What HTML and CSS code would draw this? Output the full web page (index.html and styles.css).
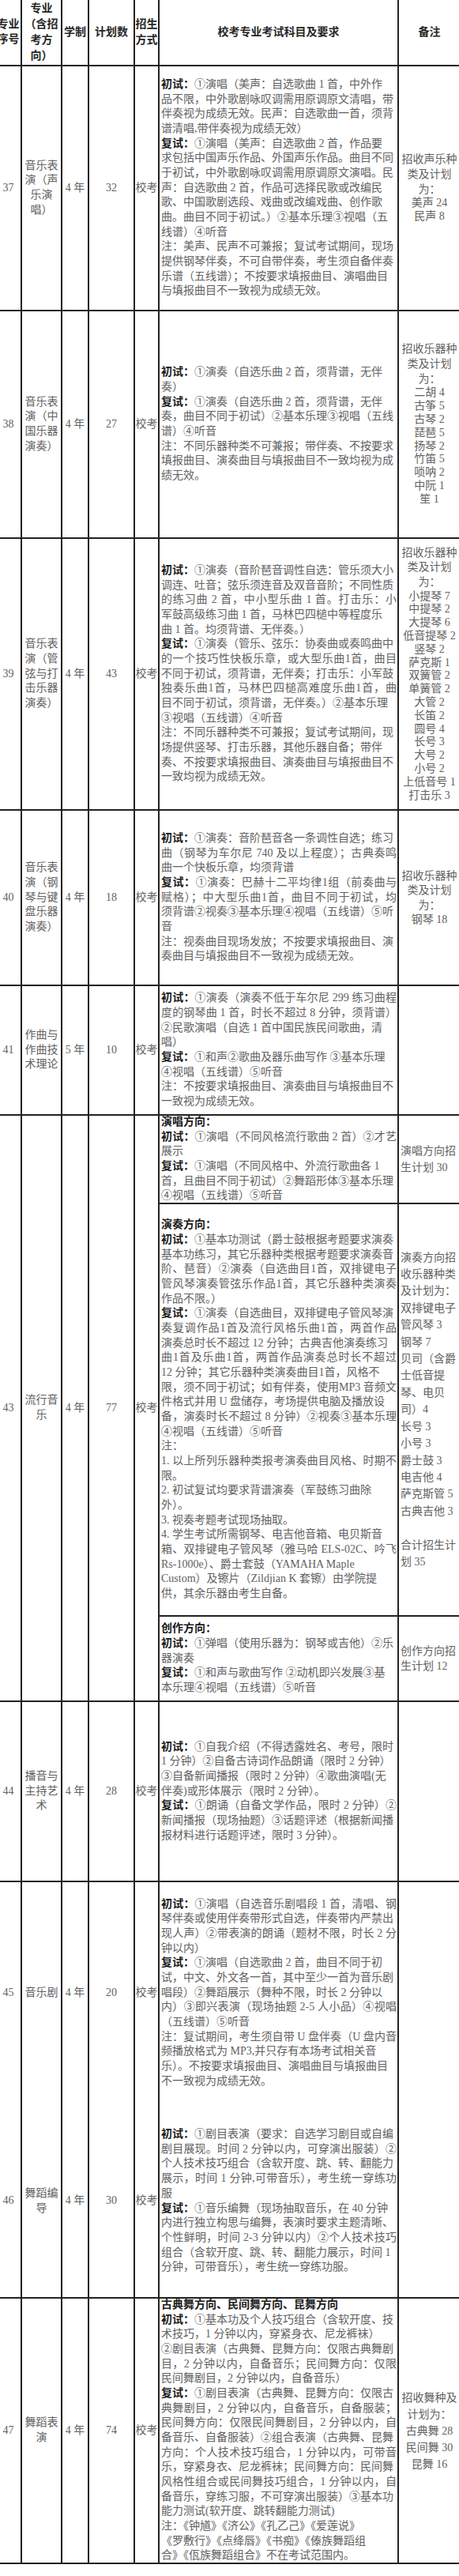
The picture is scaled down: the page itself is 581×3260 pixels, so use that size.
FILE: index.html
```
<!DOCTYPE html>
<html lang="zh-CN">
<head>
<meta charset="utf-8">
<title>校考专业考试科目及要求</title>
<link rel="stylesheet" href="styles.css">
</head>
<body>
<div class="sheet">
  <div class="c h">专业<br>序号</div>
  <div class="c h h2">专业<br>（含招<br>考方<br>向）</div>
  <div class="c h">学制</div>
  <div class="c h">计划数</div>
  <div class="c h h2">招生<br>方式</div>
  <div class="c h">校考专业考试科目及要求</div>
  <div class="c h">备注</div>

  <div class="c">37</div>
  <div class="c">音乐表<br>演（声<br>乐演<br>唱）</div>
  <div class="c">4 年</div>
  <div class="c">32</div>
  <div class="c">校考</div>
  <div class="c req"><div class="tx">
    <div><b>初试：</b>①演唱（美声：自选歌曲 1 首，中外作</div>
    <div>品不限，中外歌剧咏叹调需用原调原文清唱，带</div>
    <div>伴奏视为成绩无效。民声：自选歌曲一首，须背</div>
    <div>谱清唱,带伴奏视为成绩无效）</div>
    <div><b>复试：</b>①演唱（美声：自选歌曲 2 首，作品要</div>
    <div>求包括中国声乐作品、外国声乐作品。曲目不同</div>
    <div>于初试，中外歌剧咏叹调需用原调原文演唱。民</div>
    <div>声：自选歌曲 2 首，作品可选择民歌或改编民</div>
    <div>歌、中国歌剧选段、戏曲或改编戏曲、创作歌</div>
    <div>曲。曲目不同于初试。）②基本乐理③视唱（五</div>
    <div>线谱）④听音</div>
    <div>注：美声、民声不可兼报；复试考试期间，现场</div>
    <div>提供钢琴伴奏，不可自带伴奏，考生须自备伴奏</div>
    <div>乐谱（五线谱）；不按要求填报曲目、演唱曲目</div>
    <div>与填报曲目不一致视为成绩无效。</div>
  </div></div>
  <div class="c rm"><div>
    <div class="hd">招收声乐种<br>类及计划<br>为：</div>
    <div class="ls">美声 24<br>民声 8</div>
  </div></div>

  <div class="c">38</div>
  <div class="c">音乐表<br>演（中<br>国乐器<br>演奏）</div>
  <div class="c">4 年</div>
  <div class="c">27</div>
  <div class="c">校考</div>
  <div class="c req"><div class="tx">
    <div><b>初试：</b>①演奏（自选乐曲 2 首，须背谱，无伴</div>
    <div>奏）</div>
    <div><b>复试：</b>①演奏（自选乐曲 2 首，须背谱，无伴</div>
    <div>奏，曲目不同于初试）②基本乐理③视唱（五线</div>
    <div>谱）④听音</div>
    <div>注：不同乐器种类不可兼报；带伴奏、不按要求</div>
    <div>填报曲目、演奏曲目与填报曲目不一致均视为成</div>
    <div>绩无效。</div>
  </div></div>
  <div class="c rm"><div>
    <div class="hd">招收乐器种<br>类及计划<br>为：</div>
    <div class="ls">二胡 4<br>古筝 5<br>古琴 2<br>琵琶 5<br>扬琴 2<br>竹笛 5<br>唢呐 2<br>中阮 1<br>笙 1</div>
  </div></div>

  <div class="c">39</div>
  <div class="c">音乐表<br>演（管<br>弦与打<br>击乐器<br>演奏）</div>
  <div class="c">4 年</div>
  <div class="c">43</div>
  <div class="c">校考</div>
  <div class="c req"><div class="tx">
    <div><b>初试：</b>①演奏（音阶琶音调性自选：管乐须大小</div>
    <div>调连、吐音；弦乐须连音及双音音阶；不同性质</div>
    <div class="j">的练习曲 2 首，中小型乐曲 1 首。打击乐：小</div>
    <div>军鼓高级练习曲 1 首，马林巴四槌中等程度乐</div>
    <div>曲 1 首。均须背谱、无伴奏。）</div>
    <div><b>复试：</b>①演奏（管乐、弦乐：协奏曲或奏鸣曲中</div>
    <div class="j">的一个技巧性快板乐章，或大型乐曲1首，曲目</div>
    <div>不同于初试，须背谱，无伴奏；打击乐：小军鼓</div>
    <div class="j">独奏乐曲1首，马林巴四槌高难度乐曲1首，曲</div>
    <div>目不同于初试，须背谱，无伴奏。）②基本乐理</div>
    <div>③视唱（五线谱）④听音</div>
    <div>注：不同乐器种类不可兼报；复试考试期间，现</div>
    <div>场提供竖琴、打击乐器，其他乐器自备；带伴</div>
    <div>奏、不按要求填报曲目、演奏曲目与填报曲目不</div>
    <div>一致均视为成绩无效。</div>
  </div></div>
  <div class="c rm"><div>
    <div class="hd">招收乐器种<br>类及计划<br>为：</div>
    <div class="ls">小提琴 7<br>中提琴 2<br>大提琴 6<br>低音提琴 2<br>竖琴 2<br>萨克斯 1<br>双簧管 2<br>单簧管 2<br>大管 2<br>长笛 2<br>圆号 4<br>长号 3<br>大号 2<br>小号 2<br>上低音号 1<br>打击乐 3</div>
  </div></div>

  <div class="c">40</div>
  <div class="c">音乐表<br>演（钢<br>琴与键<br>盘乐器<br>演奏）</div>
  <div class="c">4 年</div>
  <div class="c">18</div>
  <div class="c">校考</div>
  <div class="c req"><div class="tx">
    <div><b>初试：</b>①演奏：音阶琶音各一条调性自选；练习</div>
    <div class="j">曲（钢琴为车尔尼 740 及以上程度）；古典奏鸣</div>
    <div>曲一个快板乐章，均须背谱</div>
    <div class="j"><b>复试：</b>①演奏：巴赫十二平均律1组（前奏曲与</div>
    <div class="j">赋格）；中大型乐曲1首，曲目不同于初试，均</div>
    <div>须背谱②视奏③基本乐理④视唱（五线谱）⑤听</div>
    <div>音</div>
    <div>注：视奏曲目现场发放；不按要求填报曲目、演</div>
    <div>奏曲目与填报曲目不一致视为成绩无效。</div>
  </div></div>
  <div class="c rm"><div>
    <div class="hd">招收乐器种<br>类及计划<br>为：</div>
    <div class="ls">钢琴 18</div>
  </div></div>

  <div class="c">41</div>
  <div class="c">作曲与<br>作曲技<br>术理论</div>
  <div class="c">5 年</div>
  <div class="c">10</div>
  <div class="c">校考</div>
  <div class="c req"><div class="tx">
    <div class="j"><b>初试：</b>①演奏（演奏不低于车尔尼 299 练习曲程</div>
    <div class="j">度的钢琴曲 1 首，时长不超过 8 分钟，须背谱）</div>
    <div>②民歌演唱（自选 1 首中国民族民间歌曲，清</div>
    <div>唱）</div>
    <div><b>复试：</b>①和声②歌曲及器乐曲写作 ③基本乐理</div>
    <div>④视唱（五线谱）⑤听音</div>
    <div>注：不按要求填报曲目、演奏曲目与填报曲目不</div>
    <div>一致视为成绩无效。</div>
  </div></div>
  <div class="c rm"></div>

  <div class="c span3">43</div>
  <div class="c span3">流行音<br>乐</div>
  <div class="c span3">4 年</div>
  <div class="c span3">77</div>
  <div class="c span3">校考</div>
  <div class="c req"><div class="tx">
    <div><b>演唱方向：</b></div>
    <div class="j"><b>初试：</b>①演唱（不同风格流行歌曲 2 首）②才艺</div>
    <div>展示</div>
    <div><b>复试：</b>①演唱（不同风格中、外流行歌曲各 1</div>
    <div>首，且曲目不同于初试）②舞蹈形体③基本乐理</div>
    <div>④视唱（五线谱）⑤听音</div>
  </div></div>
  <div class="c rm left"><div>演唱方向招<br>生计划 30</div></div>

  <div class="c req"><div class="tx">
    <div><b>演奏方向：</b></div>
    <div><b>初试：</b>①基本功测试（爵士鼓根据考题要求演奏</div>
    <div>基本功练习，其它乐器种类根据考题要求演奏音</div>
    <div class="j">阶、琶音）②演奏（自选曲目1首，双排键电子</div>
    <div class="j">管风琴演奏管弦乐作品1首，其它乐器种类演奏</div>
    <div>作品不限。）</div>
    <div><b>复试：</b>①演奏（自选曲目，双排键电子管风琴演</div>
    <div class="j">奏复调作品1首及流行风格乐曲1首，两首作品</div>
    <div>演奏总时长不超过 12 分钟；古典吉他演奏练习</div>
    <div class="j">曲1首及乐曲1首，两首作品演奏总时长不超过</div>
    <div>12 分钟；其它乐器种类演奏曲目1首，风格不</div>
    <div class="j">限，须不同于初试；如有伴奏，使用MP3 音频文</div>
    <div>件格式并用 U 盘储存，考场提供电脑及播放设</div>
    <div class="j">备，演奏时长不超过 8 分钟）②视奏③基本乐理</div>
    <div>④视唱（五线谱）⑤听音</div>
    <div>注：</div>
    <div class="j">1. 以上所列乐器种类报考演奏曲目风格、时期不</div>
    <div>限。</div>
    <div>2. 初试复试均要求背谱演奏（军鼓练习曲除</div>
    <div>外）。</div>
    <div>3. 视奏考题考试现场抽取。</div>
    <div>4. 学生考试所需钢琴、电吉他音箱、电贝斯音</div>
    <div class="j">箱、双排键电子管风琴（雅马哈 ELS-02C、吟飞</div>
    <div>Rs-1000e）、爵士套鼓（YAMAHA Maple</div>
    <div>Custom）及镲片（Zildjian K 套镲）由学院提</div>
    <div>供，其余乐器由考生自备。</div>
  </div></div>
  <div class="c rm left"><div>演奏方向招<br>收乐器种类<br>及计划为：<br>双排键电子<br>管风琴 3<br>钢琴 7<br>贝司（含爵<br>士低音提<br>琴、电贝<br>司）4<br>长号 3<br>小号 3<br>爵士鼓 3<br>电吉他 4<br>萨克斯管 5<br>古典吉他 3<br><br>合计招生计<br>划 35</div></div>

  <div class="c req"><div class="tx">
    <div><b>创作方向：</b></div>
    <div><b>初试：</b>①弹唱（使用乐器为：钢琴或吉他）②乐</div>
    <div>器演奏</div>
    <div><b>复试：</b>①和声与歌曲写作 ②动机即兴发展③基</div>
    <div>本乐理④视唱（五线谱）⑤听音</div>
  </div></div>
  <div class="c rm left tight"><div>创作方向招<br>生计划 12</div></div>

  <div class="c">44</div>
  <div class="c">播音与<br>主持艺<br>术</div>
  <div class="c">4 年</div>
  <div class="c">28</div>
  <div class="c">校考</div>
  <div class="c req"><div class="tx">
    <div><b>初试：</b>①自我介绍（不得透露姓名、考号，限时</div>
    <div>1 分钟）②自备古诗词作品朗诵（限时 2 分钟）</div>
    <div>③自备新闻播报（限时 2 分钟）④歌曲演唱(无</div>
    <div>伴奏)或形体展示（限时 2 分钟）。</div>
    <div class="j"><b>复试：</b>①朗诵（自备文学作品，限时 2 分钟）②</div>
    <div>新闻播报（现场抽题）③话题评述（根据新闻播</div>
    <div>报材料进行话题评述，限时 3 分钟）。</div>
  </div></div>
  <div class="c rm"></div>

  <div class="c open">45</div>
  <div class="c open">音乐剧</div>
  <div class="c open">4 年</div>
  <div class="c open">20</div>
  <div class="c open">校考</div>
  <div class="c req open"><div class="tx">
    <div class="j"><b>初试：</b>①演唱（自选音乐剧唱段 1 首，清唱、钢</div>
    <div>琴伴奏或使用伴奏带形式自选，伴奏带内严禁出</div>
    <div class="j">现人声）②带表演的朗诵（题材不限，时长 2 分</div>
    <div>钟以内）</div>
    <div><b>复试：</b>①演唱（自选歌曲 2 首，曲目不同于初</div>
    <div>试，中文、外文各一首，其中至少一首为音乐剧</div>
    <div>唱段）②舞蹈展示（舞种不限，时长 2 分钟以</div>
    <div class="j">内）③即兴表演（现场抽题 2-5 人小品）④视唱</div>
    <div>（五线谱）⑤听音</div>
    <div class="j">注：复试期间，考生须自带 U 盘伴奏（U 盘内音</div>
    <div>频播放格式为 MP3,并只存有本场考试相关音</div>
    <div>乐）。不按要求填报曲目、演唱曲目与填报曲目</div>
    <div>不一致视为成绩无效。</div>
  </div></div>
  <div class="c rm open"></div>

  <div class="c">46</div>
  <div class="c">舞蹈编<br>导</div>
  <div class="c">4 年</div>
  <div class="c">30</div>
  <div class="c">校考</div>
  <div class="c req"><div class="tx">
    <div><b>初试：</b>①剧目表演（要求：自选学习剧目或自编</div>
    <div class="j">剧目展现。时间 2 分钟以内，可穿演出服装）②</div>
    <div>个人技术技巧组合（含软开度、跳、转、翻能力</div>
    <div class="j">展示，时间 1 分钟,可带音乐），考生统一穿练功</div>
    <div>服</div>
    <div><b>复试：</b>①音乐编舞（现场抽取音乐，在 40 分钟</div>
    <div>内进行独立构思与编舞，表演时要求主题清晰、</div>
    <div class="j">个性鲜明，时间 2-3 分钟以内）②个人技术技巧</div>
    <div>组合（含软开度、跳、转、翻能力展示，时间 1</div>
    <div>分钟，可带音乐），考生统一穿练功服。</div>
  </div></div>
  <div class="c rm"></div>

  <div class="c">47</div>
  <div class="c">舞蹈表<br>演</div>
  <div class="c">4 年</div>
  <div class="c">74</div>
  <div class="c">校考</div>
  <div class="c req"><div class="tx">
    <div><b>古典舞方向、民间舞方向、昆舞方向</b></div>
    <div><b>初试：</b>①基本功及个人技巧组合（含软开度、技</div>
    <div>术技巧，1 分钟以内，穿紧身衣、尼龙裤袜）</div>
    <div>②剧目表演（古典舞、昆舞方向：仅限古典舞剧</div>
    <div class="j">目，2 分钟以内，自备音乐；民间舞方向：仅限</div>
    <div>民间舞剧目，2 分钟以内，自备音乐）</div>
    <div><b>复试：</b>①剧目表演（古典舞、昆舞方向：仅限古</div>
    <div class="j">典舞剧目，2 分钟以内，自备音乐，自备服装；</div>
    <div class="j">民间舞方向：仅限民间舞剧目，2 分钟以内，自</div>
    <div>备音乐、自备服装）②组合表演（古典舞、昆舞</div>
    <div class="j">方向：个人技术技巧组合，1 分钟以内，可带音</div>
    <div>乐，穿紧身衣、尼龙裤袜；民间舞方向：民间舞</div>
    <div class="j">风格性组合或民间舞技巧组合，1 分钟以内，自</div>
    <div>备音乐，穿练习服，不可穿演出服装）③基本功</div>
    <div>能力测试(软开度、跳转翻能力测试)</div>
    <div>注：《钟馗》《济公》《孔乙己》《爱莲说》</div>
    <div>《罗敷行》《点绛唇》《书痴》《傣族舞蹈组</div>
    <div>合》《佤族舞蹈组合》不在考试范围内。</div>
  </div></div>
  <div class="c rm wide"><div>招收舞种及<br>计划为：<br>古典舞 28<br>民间舞 30<br>昆舞 16</div></div>
</div>
</body>
</html>
```

FILE: styles.css
```
html, body {
  margin: 0;
  padding: 0;
  background: #ffffff;
}

body {
  width: 581px;
  overflow: hidden;
}

.sheet {
  display: grid;
  grid-template-columns: 33px 51px 34px 58px 31px 303px 79px;
  grid-template-rows: 84px 310px 288px 344px 222px 164px 112px 522px 108px 228px 282px 245px 336px;
  width: max-content;
  margin: -2px 0 0 -7px;
  border-left: 2px solid #222;
  border-top: 2px solid #222;
  font-family: "Liberation Serif", "Noto Sans CJK SC", serif;
  font-size: 14px;
  line-height: 18.67px;
  color: #616161;
}

.c {
  box-sizing: border-box;
  border-right: 2px solid #222;
  border-bottom: 2px solid #222;
  display: flex;
  align-items: center;
  justify-content: center;
  text-align: center;
  overflow: hidden;
  min-width: 0;
  min-height: 0;
}

.c.open {
  border-bottom: 0;
  padding-bottom: 2px;
}

.h {
  font-weight: 700;
  color: #262626;
}

.h2 {
  line-height: 20px;
}

.span3 {
  grid-row: span 3;
}

.req {
  justify-content: flex-start;
  text-align: left;
  padding: 0 1px 0 2px;
}

.req .tx {
  width: 100%;
}

.j {
  text-align: justify;
  text-align-last: justify;
}

b {
  font-weight: 700;
  color: #1a1a1a;
}

.rm .hd {
  line-height: 18.67px;
}

.rm .ls {
  line-height: 16.8px;
}

.rm.left {
  justify-content: flex-start;
  text-align: left;
  padding-left: 2px;
  line-height: 21.4px;
}

.rm.left.tight {
  line-height: 19px;
}

.rm.wide {
  line-height: 21px;
}
```
